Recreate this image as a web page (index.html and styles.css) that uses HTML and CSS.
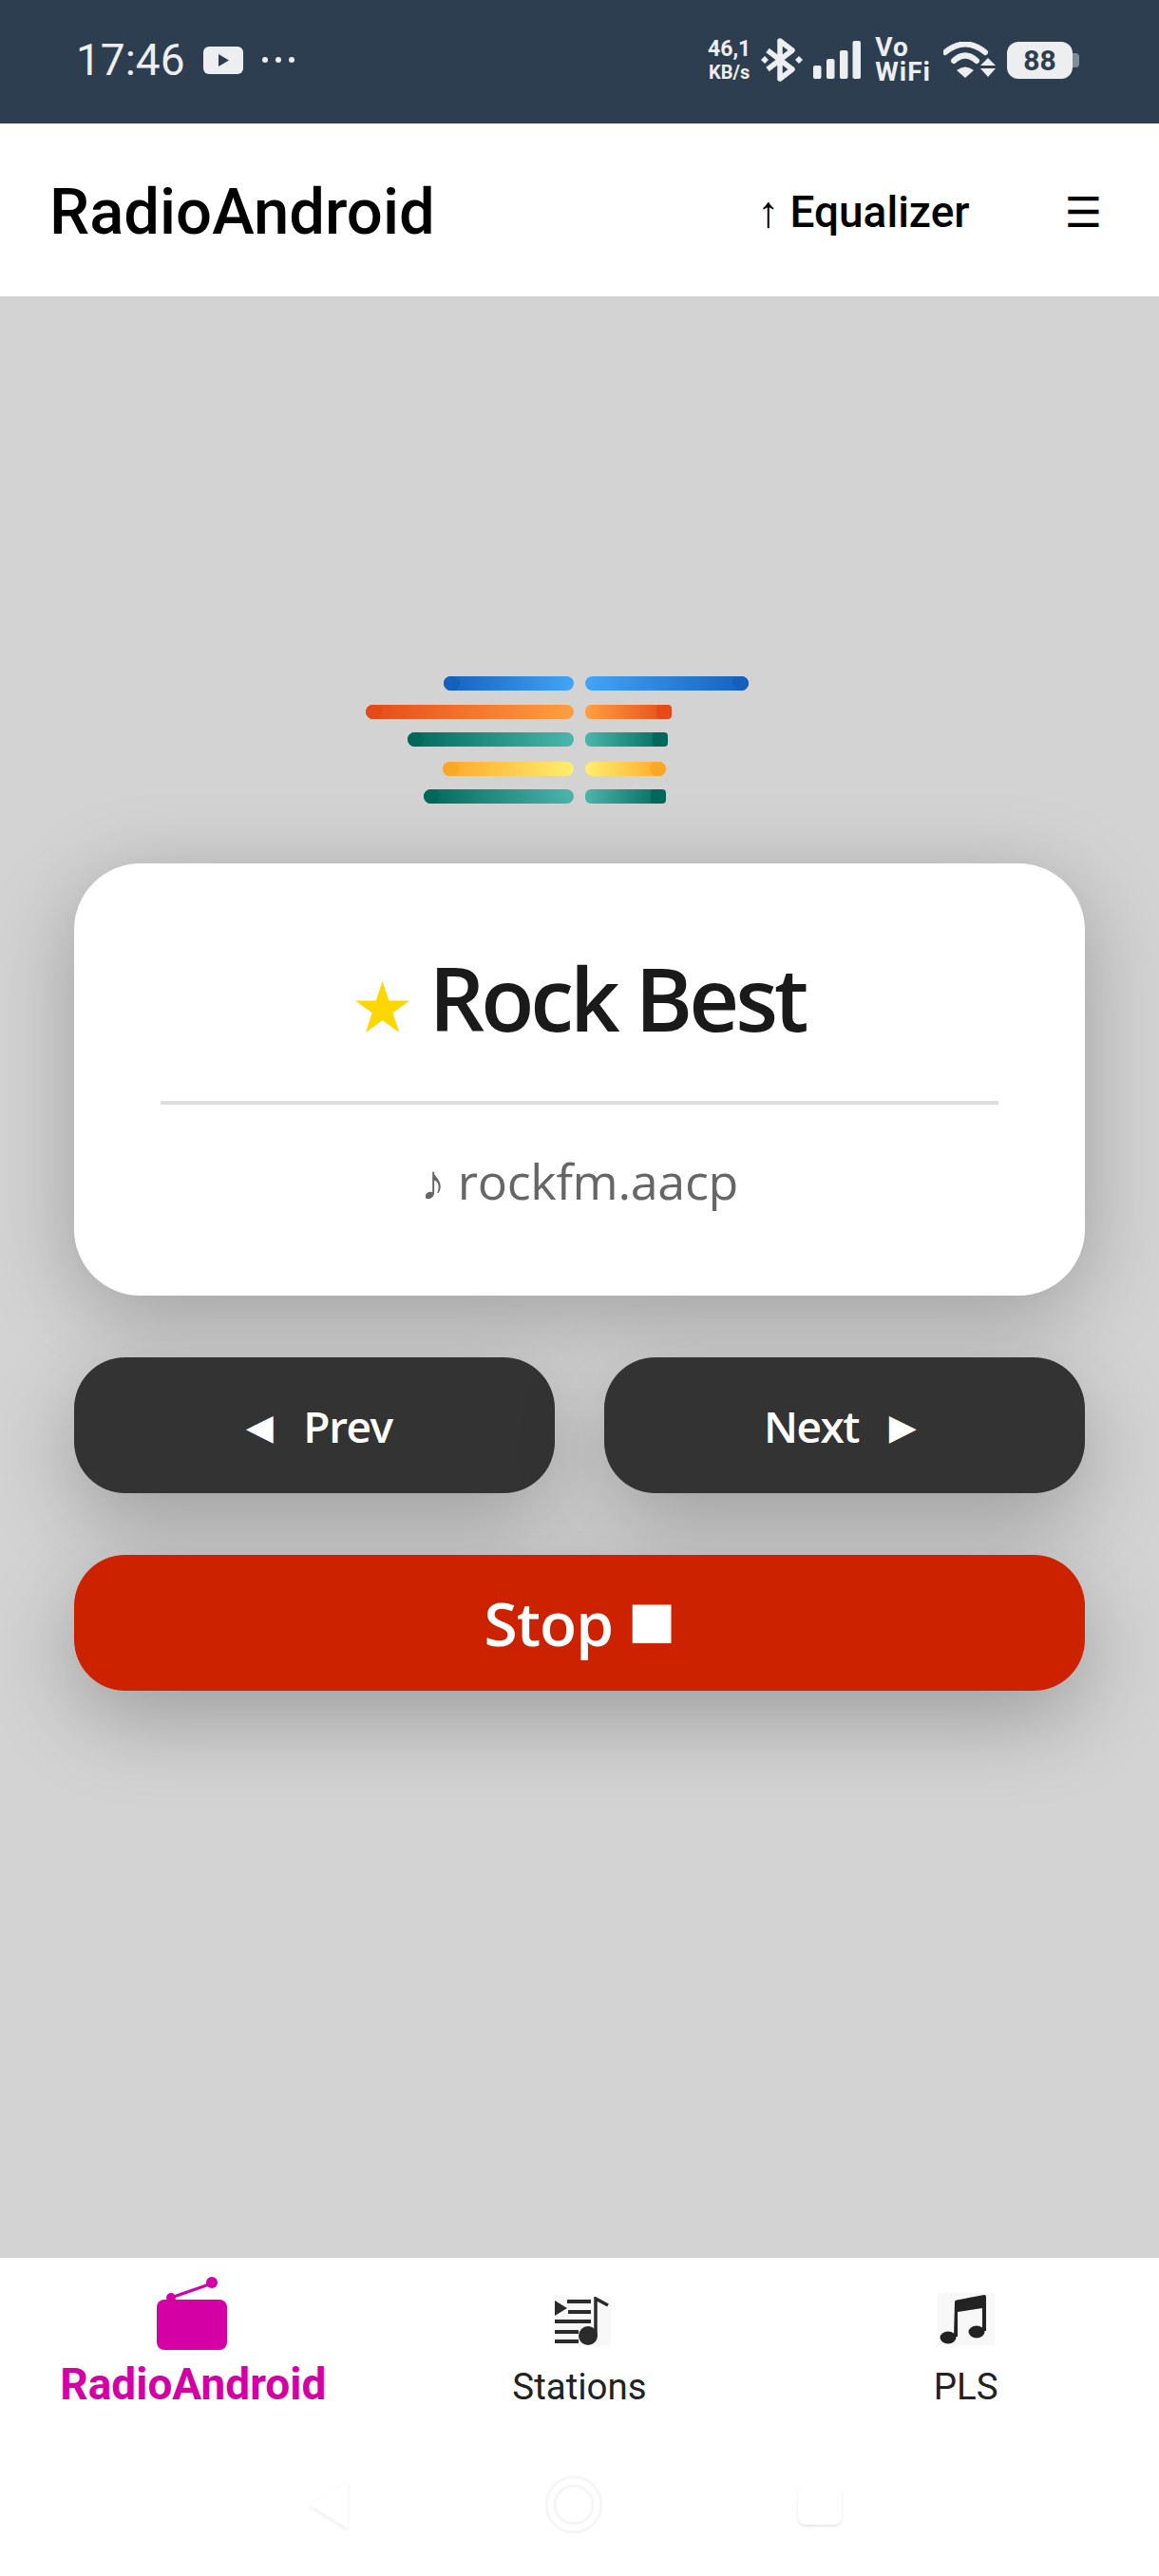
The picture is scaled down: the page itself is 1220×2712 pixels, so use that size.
FILE: index.html
```html
<!DOCTYPE html>
<html lang="en">
<head>
    <meta charset="UTF-8">
    <meta name="viewport" content="width=device-width, initial-scale=1.0">
    <title>RadioAndroid</title>
    <link rel="stylesheet" href="styles.css">
</head>
<body>
    <div class="statusbar">
        <div class="status-left">
            <span class="time">17:46</span>
            <svg class="yt" width="42" height="29" viewBox="0 0 42 29">
                <rect width="42" height="29" rx="6" fill="#eceef0"/>
                <path d="M16 8 L27 14.5 L16 21 Z" fill="#2d3e50"/>
            </svg>
            <svg class="dots" width="34" height="6" viewBox="0 0 34 6">
                <circle cx="3" cy="3" r="3" fill="#eceef0"/>
                <circle cx="17" cy="3" r="3" fill="#eceef0"/>
                <circle cx="31" cy="3" r="3" fill="#eceef0"/>
            </svg>
        </div>
        <div class="status-right">
            <div class="speed">
                <span class="speed-num">46,1</span>
                <span class="speed-unit">KB/s</span>
            </div>
            <svg width="44" height="46" viewBox="0 0 44 46">
                <path d="M20 23 L20 3 L33 13 L7 33 M20 23 L20 43 L33 33 L7 13" fill="none" stroke="#eceef0" stroke-width="5.5" stroke-linejoin="round"/>
                <path d="M4 19 L8 23 L4 27 L0 23 Z M40 19 L44 23 L40 27 L36 23 Z" fill="#eceef0"/>
            </svg>
            <svg width="50" height="40" viewBox="0 0 50 40">
                <rect x="0" y="26" width="8.5" height="14" rx="2" fill="#eceef0"/>
                <rect x="14" y="19" width="8.5" height="21" rx="2" fill="#eceef0"/>
                <rect x="28" y="10" width="8.5" height="30" rx="2" fill="#eceef0"/>
                <rect x="41.5" y="0" width="8.5" height="40" rx="2" fill="#eceef0"/>
            </svg>
            <div class="vowifi">Vo<br>WiFi</div>
            <svg width="56" height="38" viewBox="0 0 56 38">
                <path d="M2 11 Q23 -6 44 11" fill="none" stroke="#eceef0" stroke-width="6" stroke-linecap="round"/>
                <path d="M11 20 Q23 9 35 20" fill="none" stroke="#eceef0" stroke-width="6" stroke-linecap="round"/>
                <path d="M14 30 Q23 23 32 30 L23 38 Z" fill="#eceef0"/>
                <path d="M47 17 L55 25 L39 25 Z M39 28 L55 28 L47 37 Z" fill="#eceef0"/>
            </svg>
            <div class="battery">
                <div class="battery-body">88</div>
                <div class="battery-nub"></div>
            </div>
        </div>
    </div>

    <header class="topbar">
        <div class="brand">RadioAndroid</div>
        <div class="topbar-actions">
            <a class="eq-link"><span class="eq-arrow">↑</span> Equalizer</a>
            <a class="burger">☰</a>
        </div>
    </header>

    <main class="player">
        <svg class="logo" width="404" height="135" viewBox="0 0 404 135">
            <defs>
                <linearGradient id="blueL"><stop offset="0" stop-color="#1560bd"/><stop offset="1" stop-color="#42a5f5"/></linearGradient>
                <linearGradient id="blueR"><stop offset="0" stop-color="#42a5f5"/><stop offset="1" stop-color="#1560bd"/></linearGradient>
                <linearGradient id="orangeL"><stop offset="0" stop-color="#e64a19"/><stop offset="1" stop-color="#ffa040"/></linearGradient>
                <linearGradient id="orangeR"><stop offset="0" stop-color="#ffa040"/><stop offset="1" stop-color="#e64a19"/></linearGradient>
                <linearGradient id="tealL"><stop offset="0" stop-color="#00695c"/><stop offset="1" stop-color="#4db6ac"/></linearGradient>
                <linearGradient id="tealR"><stop offset="0" stop-color="#4db6ac"/><stop offset="1" stop-color="#00695c"/></linearGradient>
                <linearGradient id="yellowL"><stop offset="0" stop-color="#ffa726"/><stop offset="1" stop-color="#ffee70"/></linearGradient>
                <linearGradient id="yellowR"><stop offset="0" stop-color="#ffee70"/><stop offset="1" stop-color="#ffa726"/></linearGradient>
            </defs>
            <rect x="82" y="0" width="137" height="15" rx="7.5" fill="url(#blueL)"/>
            <rect x="82" y="0" width="17" height="15" rx="7.5" fill="#1560bd"/>
            <rect x="231" y="0" width="172" height="15" rx="7.5" fill="url(#blueR)"/>
            <rect x="386" y="0" width="17" height="15" rx="7.5" fill="#1560bd"/>
            <rect x="0" y="30" width="219" height="15" rx="7.5" fill="url(#orangeL)"/>
            <rect x="0" y="30" width="17" height="15" rx="7.5" fill="#e64a19"/>
            <rect x="231" y="30" width="91" height="15" rx="6" fill="url(#orangeR)"/>
            <rect x="306" y="30" width="16" height="15" rx="4" fill="#e64a19"/>
            <rect x="44" y="59" width="175" height="15" rx="7.5" fill="url(#tealL)"/>
            <rect x="44" y="59" width="17" height="15" rx="7.5" fill="#00695c"/>
            <rect x="231" y="59" width="87" height="15" rx="6" fill="url(#tealR)"/>
            <rect x="302" y="59" width="16" height="15" rx="4" fill="#00695c"/>
            <rect x="81" y="90" width="138" height="15" rx="7.5" fill="url(#yellowL)"/>
            <rect x="81" y="90" width="17" height="15" rx="7.5" fill="#f9a825"/>
            <rect x="231" y="90" width="85" height="15" rx="7.5" fill="url(#yellowR)"/>
            <rect x="299" y="90" width="17" height="15" rx="7.5" fill="#f9a825"/>
            <rect x="61" y="119" width="158" height="15" rx="7.5" fill="url(#tealL)"/>
            <rect x="61" y="119" width="17" height="15" rx="7.5" fill="#00695c"/>
            <rect x="231" y="119" width="85" height="15" rx="6" fill="url(#tealR)"/>
            <rect x="300" y="119" width="16" height="15" rx="4" fill="#00695c"/>
        </svg>

        <section class="card">
            <div class="station-name"><span class="star">★</span> Rock Best</div>
            <div class="divider"></div>
            <div class="stream-name">♪ rockfm.aacp</div>
        </section>

        <div class="btn-row">
            <button class="btn btn-dark"><span class="tri tri-prev">◄</span> Prev</button>
            <button class="btn btn-dark">Next <span class="tri tri-next">►</span></button>
        </div>
        <button class="btn btn-stop">Stop <span class="stop-square">■</span></button>
    </main>

    <footer class="bottom">
        <nav class="tabs">
            <a class="tab tab-active">
                <svg class="tab-icon" width="76" height="78" viewBox="0 0 76 78">
                    <path d="M15 22 L58 7" stroke="#d400a6" stroke-width="3"/>
                    <circle cx="15" cy="22" r="5" fill="#d400a6"/>
                    <circle cx="58" cy="6" r="6" fill="#d400a6"/>
                    <rect x="0" y="24" width="74" height="53" rx="8" fill="#d400a6"/>
                </svg>
                <span>RadioAndroid</span>
            </a>
            <a class="tab">
                <svg class="tab-icon tab-icon-stations" width="60" height="51" viewBox="0 0 60 51">
                    <rect width="60" height="51" fill="#f8f8f8"/>
                    <path d="M1 4 L14 12 L1 20 Z" fill="#2b2b2b"/>
                    <path d="M14 5 H39 M15 16 H39 M1 26 H39 M1 37 H26 M1 47 H26" stroke="#2b2b2b" stroke-width="4"/>
                    <path d="M44 41 V2 L57 9" fill="none" stroke="#2b2b2b" stroke-width="3.5"/>
                    <circle cx="36" cy="41" r="10" fill="#2b2b2b"/>
                </svg>
                <span>Stations</span>
            </a>
            <a class="tab">
                <svg class="tab-icon" width="60" height="55" viewBox="0 0 60 55">
                    <rect width="60" height="55" fill="#f8f8f8"/>
                    <path d="M18 9 Q18 8 20 7.5 L49 2 Q51 2 51 4 V40 H47 V16 L21 20 V46 H17 Z" fill="#222"/>
                    <ellipse cx="11" cy="47" rx="8.5" ry="6.5" fill="#222"/>
                    <ellipse cx="41" cy="41" rx="8.5" ry="6.5" fill="#222"/>
                </svg>
                <span>PLS</span>
            </a>
        </nav>
        <div class="gesture-bar">
            <svg width="44" height="54" viewBox="0 0 44 54"><path class="gesture-shape" d="M42 2 V52 L2 27 Z"/></svg>
            <svg width="62" height="62" viewBox="0 0 62 62">
                <circle class="gesture-ring" cx="31" cy="31" r="29"/>
                <circle class="gesture-ring" cx="31" cy="31" r="20"/>
            </svg>
            <div class="gesture-square"></div>
        </div>
    </footer>
</body>
</html>
```

FILE: styles.css
```css
* {
    margin: 0;
    padding: 0;
    box-sizing: border-box;
}

html, body {
    width: 1220px;
    height: 2712px;
    overflow: hidden;
}

body {
    display: flex;
    flex-direction: column;
    font-family: Roboto, sans-serif;
    background-color: #d3d3d3;
}

/* status bar */
.statusbar {
    height: 130px;
    flex: none;
    background-color: #2d3e50;
    color: #eceef0;
    display: flex;
    justify-content: space-between;
    align-items: center;
    padding: 0 84px 4px 80px;
}

.status-left {
    display: flex;
    align-items: center;
}

.time {
    font-size: 46px;
    line-height: 54px;
}

.yt {
    margin-left: 19px;
}

.dots {
    margin-left: 20px;
}

.status-right {
    display: flex;
    align-items: center;
    gap: 11px;
}

.speed {
    display: flex;
    flex-direction: column;
    align-items: center;
    font-weight: 700;
}

.speed-num {
    font-size: 23px;
    line-height: 26px;
}

.speed-unit {
    font-size: 20px;
    line-height: 22px;
}

.vowifi {
    font-size: 28px;
    line-height: 26px;
    letter-spacing: 1px;
    font-weight: 700;
    margin-left: 4px;
    margin-right: 2px;
}

.battery {
    display: flex;
    align-items: center;
}

.battery-body {
    width: 69px;
    height: 39px;
    border-radius: 12px;
    background-color: #eceef0;
    color: #2d3e50;
    font-size: 30px;
    font-weight: 700;
    line-height: 39px;
    text-align: center;
}

.battery-nub {
    width: 7px;
    height: 15px;
    background-color: #7f8c99;
    border-radius: 0 4px 4px 0;
}

/* header */
.topbar {
    height: 182px;
    flex: none;
    background-color: white;
    color: black;
    display: flex;
    justify-content: space-between;
    align-items: center;
    padding: 4px 60px 0 52px;
}

.brand {
    font-size: 67px;
    font-weight: 500;
}

.topbar-actions {
    display: flex;
    align-items: center;
    gap: 100px;
}

.eq-link {
    font-size: 46px;
    font-weight: 500;
}

.eq-arrow {
    font-weight: 700;
}

.burger {
    font-size: 44px;
    font-family: "DejaVu Sans", sans-serif;
}

/* player */
.player {
    flex: 1;
    display: flex;
    flex-direction: column;
    padding: 400px 78px 0;
}

.logo {
    display: block;
    align-self: flex-start;
    margin-left: 307px;
    margin-bottom: 62px;
}

.card {
    height: 455px;
    background-color: white;
    border-radius: 70px;
    box-shadow: 0 20px 90px rgba(0, 0, 0, 0.25);
    padding: 0 91px;
    text-align: center;
    margin-bottom: 65px;
}

.station-name {
    font-family: "Open Sans", sans-serif;
    font-size: 92px;
    font-weight: 600;
    letter-spacing: -4px;
    color: #1a1a1a;
    line-height: 128px;
    padding-top: 78px;
    height: 250px;
}

.star {
    color: #ffd700;
    font-size: 66px;
    letter-spacing: 0;
    vertical-align: 2px;
}

.divider {
    height: 4px;
    background-color: #ddd;
}

.stream-name {
    font-family: "Open Sans", sans-serif;
    font-size: 52px;
    letter-spacing: -0.3px;
    color: #666;
    padding-top: 44px;
}

.btn-row {
    display: flex;
    gap: 52px;
    margin-bottom: 65px;
}

.btn {
    height: 143px;
    border: none;
    border-radius: 54px;
    font-family: "Open Sans", sans-serif;
    color: white;
    box-shadow: 0 30px 90px rgba(0, 0, 0, 0.25);
}

.btn-dark {
    flex: 1;
    background-color: #333;
    font-size: 46px;
    font-weight: 600;
    letter-spacing: -1.5px;
}

.tri {
    font-size: 48px;
    letter-spacing: 0;
}

.tri-prev {
    margin-right: 12px;
}

.tri-next {
    margin-left: 12px;
}

.btn-stop {
    background-color: #cc2200;
    font-size: 64px;
    font-weight: 600;
    letter-spacing: -1px;
}

.stop-square {
    font-size: 84px;
    line-height: 64px;
    vertical-align: -2px;
}

/* bottom */
.bottom {
    height: 335px;
    flex: none;
    background-color: white;
}

.tabs {
    display: grid;
    grid-template-columns: 1fr 1fr 1fr;
    padding-top: 20px;
}

.tab {
    display: flex;
    flex-direction: column;
    align-items: center;
    font-size: 38.5px;
    color: #222;
    padding-bottom: 2px;
}

.tab-icon {
    display: block;
    margin-top: auto;
    margin-bottom: 21px;
}

.tab-icon-stations {
    margin-left: 6px;
}

.tab-active {
    color: #d400a6;
    font-size: 46px;
    font-weight: 700;
    padding-bottom: 0;
}

.tab-active .tab-icon {
    margin-bottom: 8px;
}

.gesture-bar {
    display: flex;
    justify-content: center;
    align-items: center;
    gap: 205px;
    margin-top: 69px;
    padding-right: 10px;
}

.gesture-shape {
    fill: white;
    filter: drop-shadow(0 2px 2px rgba(0, 0, 0, 0.08));
}

.gesture-ring {
    fill: none;
    stroke: #f6f6f6;
    stroke-width: 3;
}

.gesture-square {
    width: 46px;
    height: 42px;
    background-color: white;
    border-radius: 8px;
    box-shadow: 0 2px 3px rgba(0, 0, 0, 0.1);
}
```
